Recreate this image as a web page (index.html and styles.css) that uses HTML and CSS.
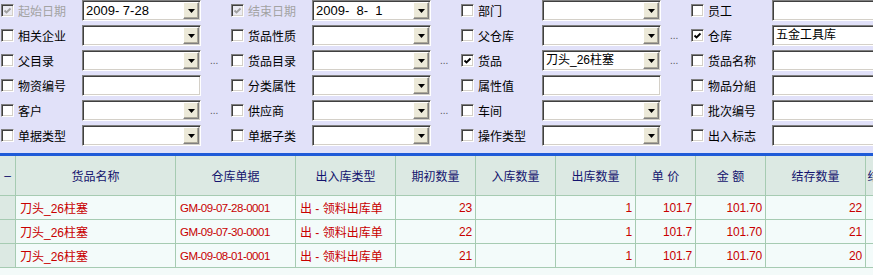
FILE: index.html
```html
<!DOCTYPE html>
<html lang="zh">
<head>
<meta charset="utf-8">
<title>出入库明细</title>
<link rel="stylesheet" href="styles.css">
</head>
<body>
<div class="filters">
  <!-- row 1 -->
  <div class="cell"><span class="cb dis"><svg class="tick" viewBox="0 0 9 9"><path d="M1.5 4.5 L3.5 6.5 L7.5 2.5"/></svg></span><span class="lbl dis">起始日期</span><span class="field"><span class="val date">2009- 7-28</span><span class="btn"><svg viewBox="0 0 7 4"><polygon points="0,0 7,0 3.5,4"/></svg></span></span></div>
  <div class="cell"><span class="cb dis"><svg class="tick" viewBox="0 0 9 9"><path d="M1.5 4.5 L3.5 6.5 L7.5 2.5"/></svg></span><span class="lbl dis">结束日期</span><span class="field"><span class="val date">2009-&nbsp; 8-&nbsp; 1</span><span class="btn"><svg viewBox="0 0 7 4"><polygon points="0,0 7,0 3.5,4"/></svg></span></span></div>
  <div class="cell"><span class="cb"></span><span class="lbl">部门</span><span class="field"><span class="val"></span><span class="btn"><svg viewBox="0 0 7 4"><polygon points="0,0 7,0 3.5,4"/></svg></span></span></div>
  <div class="cell"><span class="cb"></span><span class="lbl">员工</span><span class="field"><span class="val"></span></span></div>
  <!-- row 2 -->
  <div class="cell"><span class="cb"></span><span class="lbl">相关企业</span><span class="field"><span class="val"></span><span class="btn"><svg viewBox="0 0 7 4"><polygon points="0,0 7,0 3.5,4"/></svg></span></span></div>
  <div class="cell"><span class="cb"></span><span class="lbl">货品性质</span><span class="field"><span class="val"></span><span class="btn"><svg viewBox="0 0 7 4"><polygon points="0,0 7,0 3.5,4"/></svg></span></span></div>
  <div class="cell"><span class="cb"></span><span class="lbl">父仓库</span><span class="field"><span class="val"></span><span class="btn"><svg viewBox="0 0 7 4"><polygon points="0,0 7,0 3.5,4"/></svg></span></span><span class="more">...</span></div>
  <div class="cell"><span class="cb on"><svg class="tick" viewBox="0 0 9 9"><path d="M1.5 4.5 L3.5 6.5 L7.5 2.5"/></svg></span><span class="lbl">仓库</span><span class="field"><span class="val">五金工具库</span></span></div>
  <!-- row 3 -->
  <div class="cell"><span class="cb"></span><span class="lbl">父目录</span><span class="field"><span class="val"></span><span class="btn"><svg viewBox="0 0 7 4"><polygon points="0,0 7,0 3.5,4"/></svg></span></span><span class="more">...</span></div>
  <div class="cell"><span class="cb"></span><span class="lbl">货品目录</span><span class="field"><span class="val"></span><span class="btn"><svg viewBox="0 0 7 4"><polygon points="0,0 7,0 3.5,4"/></svg></span></span><span class="more">...</span></div>
  <div class="cell"><span class="cb on"><svg class="tick" viewBox="0 0 9 9"><path d="M1.5 4.5 L3.5 6.5 L7.5 2.5"/></svg></span><span class="lbl">货品</span><span class="field"><span class="val">刀头_26柱塞</span><span class="btn"><svg viewBox="0 0 7 4"><polygon points="0,0 7,0 3.5,4"/></svg></span></span><span class="more">...</span></div>
  <div class="cell"><span class="cb"></span><span class="lbl">货品名称</span><span class="field"><span class="val"></span></span></div>
  <!-- row 4 -->
  <div class="cell"><span class="cb"></span><span class="lbl">物资编号</span><span class="field"><span class="val"></span></span></div>
  <div class="cell"><span class="cb"></span><span class="lbl">分类属性</span><span class="field"><span class="val"></span><span class="btn"><svg viewBox="0 0 7 4"><polygon points="0,0 7,0 3.5,4"/></svg></span></span></div>
  <div class="cell"><span class="cb"></span><span class="lbl">属性值</span><span class="field"><span class="val"></span></span></div>
  <div class="cell"><span class="cb"></span><span class="lbl">物品分組</span><span class="field"><span class="val"></span></span></div>
  <!-- row 5 -->
  <div class="cell"><span class="cb"></span><span class="lbl">客户</span><span class="field"><span class="val"></span><span class="btn"><svg viewBox="0 0 7 4"><polygon points="0,0 7,0 3.5,4"/></svg></span></span><span class="more">...</span></div>
  <div class="cell"><span class="cb"></span><span class="lbl">供应商</span><span class="field"><span class="val"></span><span class="btn"><svg viewBox="0 0 7 4"><polygon points="0,0 7,0 3.5,4"/></svg></span></span><span class="more">...</span></div>
  <div class="cell"><span class="cb"></span><span class="lbl">车间</span><span class="field"><span class="val"></span><span class="btn"><svg viewBox="0 0 7 4"><polygon points="0,0 7,0 3.5,4"/></svg></span></span></div>
  <div class="cell"><span class="cb"></span><span class="lbl">批次编号</span><span class="field"><span class="val"></span></span></div>
  <!-- row 6 -->
  <div class="cell"><span class="cb"></span><span class="lbl">单据类型</span><span class="field"><span class="val"></span><span class="btn"><svg viewBox="0 0 7 4"><polygon points="0,0 7,0 3.5,4"/></svg></span></span></div>
  <div class="cell"><span class="cb"></span><span class="lbl">单据子类</span><span class="field"><span class="val"></span><span class="btn"><svg viewBox="0 0 7 4"><polygon points="0,0 7,0 3.5,4"/></svg></span></span></div>
  <div class="cell"><span class="cb"></span><span class="lbl">操作类型</span><span class="field"><span class="val"></span><span class="btn"><svg viewBox="0 0 7 4"><polygon points="0,0 7,0 3.5,4"/></svg></span></span></div>
  <div class="cell"><span class="cb"></span><span class="lbl">出入标志</span><span class="field"><span class="val"></span></span></div>
</div>

<div class="grid">
  <div class="h ind">–</div>
  <div class="h">货品名称</div>
  <div class="h">仓库单据</div>
  <div class="h">出入库类型</div>
  <div class="h">期初数量</div>
  <div class="h">入库数量</div>
  <div class="h">出库数量</div>
  <div class="h">单 价</div>
  <div class="h">金 额</div>
  <div class="h">结存数量</div>
  <div class="h">结存金额</div>

  <div class="ind"></div>
  <div class="d">刀头_26柱塞</div>
  <div class="d code">GM-09-07-28-0001</div>
  <div class="d">出 - 领料出库单</div>
  <div class="d n r">23</div>
  <div class="d n r"></div>
  <div class="d n r">1</div>
  <div class="d n r">101.7</div>
  <div class="d n r">101.70</div>
  <div class="d n r">22</div>
  <div class="d n r"></div>

  <div class="ind"></div>
  <div class="d">刀头_26柱塞</div>
  <div class="d code">GM-09-07-30-0001</div>
  <div class="d">出 - 领料出库单</div>
  <div class="d n r">22</div>
  <div class="d n r"></div>
  <div class="d n r">1</div>
  <div class="d n r">101.7</div>
  <div class="d n r">101.70</div>
  <div class="d n r">21</div>
  <div class="d n r"></div>

  <div class="ind"></div>
  <div class="d">刀头_26柱塞</div>
  <div class="d code">GM-09-08-01-0001</div>
  <div class="d">出 - 领料出库单</div>
  <div class="d n r">21</div>
  <div class="d n r"></div>
  <div class="d n r">1</div>
  <div class="d n r">101.7</div>
  <div class="d n r">101.70</div>
  <div class="d n r">20</div>
  <div class="d n r"></div>
</div>
</body>
</html>
```
FILE: styles.css
```css
* { box-sizing: border-box; }
html, body { margin: 0; }
body {
  width: 873px;
  height: 275px;
  overflow: hidden;
  background: #F3FAF9;
  font-family: "Liberation Sans", "Noto Sans CJK SC", sans-serif;
  font-size: 12px;
  color: #000;
}

/* ---------- filter panel ---------- */
.filters {
  background: #E1E1F9;
  display: grid;
  grid-template-columns: repeat(4, 230px);
  row-gap: 4px;
  padding: 0 0 7px 1px;
  border-bottom: 3px solid #1F5BD8;
  overflow: hidden;
}
.cell {
  display: flex;
  align-items: center;
  height: 21px;
  white-space: nowrap;
}
.cb {
  flex: none;
  width: 13px;
  height: 13px;
  margin-right: 4px;
  background: #fff;
  border: 1px solid;
  border-color: #808080 #fff #fff #808080;
  box-shadow: inset 1px 1px 0 #404040, inset -1px -1px 0 #D4D0C8;
  display: flex;
  align-items: center;
  justify-content: center;
}
.cb.dis { background: #EBEBF3; }
.tick { width: 9px; height: 9px; }
.tick path { fill: none; stroke: #000; stroke-width: 1.8; }
.cb.dis .tick path { stroke: #A0A0A0; }
.lbl {
  flex: none;
  width: 64px;
  line-height: 21px;
  font-family: "Noto Sans CJK SC", sans-serif;
}
.lbl.dis { color: #A3A3A3; }
.field {
  flex: none;
  width: 119px;
  height: 21px;
  background: #fff;
  border: 1px solid;
  border-color: #808080 #fff #fff #808080;
  box-shadow: inset 1px 1px 0 #404040, inset -1px -1px 0 #D4D0C8;
  display: flex;
  align-items: center;
  padding: 1px 1px 1px 3px;
}
.val {
  flex: 1;
  overflow: hidden;
  line-height: 17px;
}
.val.date { font-size: 13px; }
.btn {
  flex: none;
  width: 16px;
  height: 17px;
  background: #ECE9D8;
  border: 1px solid;
  border-color: #fff #808080 #808080 #fff;
  box-shadow: inset -1px -1px 0 #ACA899;
  display: flex;
  align-items: center;
  justify-content: center;
}
.btn svg { width: 7px; height: 4px; fill: #000; }
.more {
  margin-left: 9px;
  font-size: 10px;
  color: #555;
  line-height: 18px;
}

/* ---------- data grid ---------- */
.grid {
  display: grid;
  grid-template-columns: 16px 160px 120px 100px 80px 80px 80px 60px 70px 100px 52px;
  grid-template-rows: 40px repeat(3, 24px);
  overflow: hidden;
  font-family: "Liberation Sans", "Noto Sans CJK SC", sans-serif;
  font-size: 12px;
}
.grid > div {
  display: flex;
  align-items: center;
  padding: 0 3px;
  white-space: nowrap;
  overflow: hidden;
  border-right: 1px solid #A6CBB2;
  border-bottom: 1px solid #A6CBB2;
}
.h {
  background: #DCE9E3;
  color: #14146E;
  justify-content: center;
}
.ind { background: #DCE9E3; }
.d { background: #F3FBFA; color: #C80000; }
.d.n { letter-spacing: -0.2px; }
.d.code { font-size: 11.5px; letter-spacing: -0.5px; }
.d:not(.r) { padding-left: 4px; }
.r { justify-content: flex-end; }
```
